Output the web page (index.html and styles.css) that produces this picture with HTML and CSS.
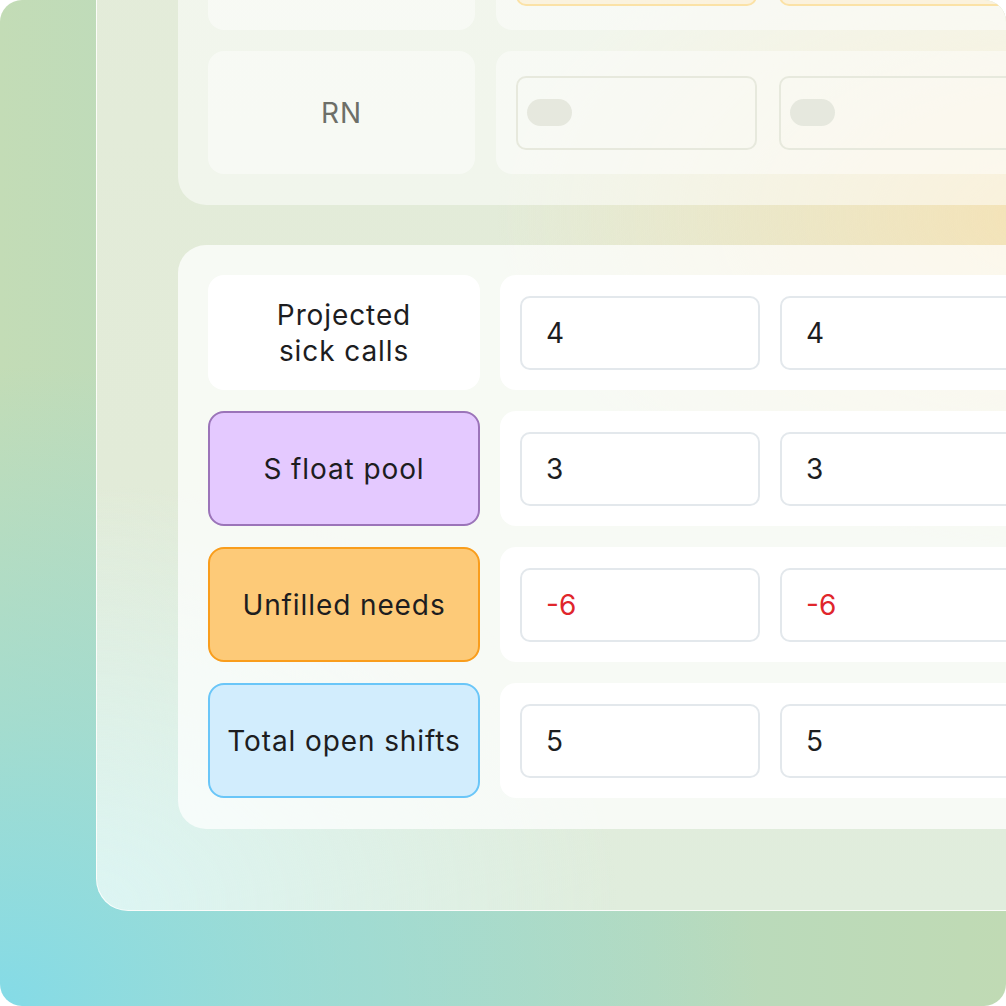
FILE: index.html
```html
<!DOCTYPE html>
<html lang="en">
<head>
<meta charset="utf-8">
<title>Staffing grid</title>
<link rel="stylesheet" href="styles.css">
</head>
<body>
<div class="frame">
  <div class="panel">
    <section class="sheet sheet-faded">
      <div class="row">
        <div class="label"></div>
        <div class="cells">
          <div class="input input-warn"></div>
          <div class="input input-warn"></div>
          <div class="input input-warn"></div>
        </div>
      </div>
      <div class="row">
        <div class="label">RN</div>
        <div class="cells">
          <div class="input"><span class="pill"></span></div>
          <div class="input"><span class="pill"></span></div>
          <div class="input"><span class="pill"></span></div>
        </div>
      </div>
    </section>

    <section class="sheet sheet-main">
      <div class="row">
        <div class="label label-plain">Projected<br>sick calls</div>
        <div class="cells">
          <div class="input">4</div>
          <div class="input">4</div>
          <div class="input">4</div>
        </div>
      </div>
      <div class="row">
        <div class="label label-purple">S float pool</div>
        <div class="cells">
          <div class="input">3</div>
          <div class="input">3</div>
          <div class="input">3</div>
        </div>
      </div>
      <div class="row">
        <div class="label label-orange">Unfilled needs</div>
        <div class="cells">
          <div class="input negative">-6</div>
          <div class="input negative">-6</div>
          <div class="input negative">-6</div>
        </div>
      </div>
      <div class="row">
        <div class="label label-blue">Total open shifts</div>
        <div class="cells">
          <div class="input">5</div>
          <div class="input">5</div>
          <div class="input">5</div>
        </div>
      </div>
    </section>
  </div>
</div>
</body>
</html>
```

FILE: styles.css
```css
* { box-sizing: border-box; }

html, body {
  margin: 0;
  padding: 0;
  background: #ffffff;
}

body {
  font-family: Inter, "Noto Sans", "Liberation Sans", sans-serif;
  color: #1d1d1f;
}

.frame {
  width: 1006px;
  height: 1006px;
  border-radius: 22px;
  overflow: hidden;
  background:
    radial-gradient(ellipse 760px 640px at 0% 100%, #84dbe7 0%, rgba(140, 220, 225, 0.55) 45%, rgba(140, 220, 225, 0) 100%),
    linear-gradient(90deg, #c3dcb6 0%, #b6dac2 35%, #b8dabd 65%, #c0dab4 100%);
}

.panel {
  width: 1300px;
  margin-left: 96px;
  margin-top: -205px;
  padding: 81px;
  border: 1px solid rgba(255, 255, 255, 0.85);
  border-radius: 32px;
  display: flex;
  flex-direction: column;
  gap: 40px;
  background:
    radial-gradient(ellipse 560px 330px at 960px 420px, rgba(246, 226, 180, 0.95) 0%, rgba(246, 226, 180, 0) 100%),
    radial-gradient(ellipse 520px 420px at 0px 1110px, rgba(220, 245, 243, 1) 0%, rgba(220, 245, 243, 0) 100%),
    linear-gradient(180deg, #e4ecda 0%, #e2ebd8 60%, #e0eddd 100%);
}

.sheet {
  border-radius: 28px;
  padding: 30px 0 31px 30px;
  display: flex;
  flex-direction: column;
  gap: 21px;
}

.sheet-faded {
  background: rgba(255, 255, 255, 0.5);
}

.sheet-main {
  background: rgba(255, 255, 255, 0.72);
}

.row {
  display: grid;
  grid-template-columns: 272px 1fr;
  gap: 20px;
  height: 115px;
}

.sheet-faded .row {
  grid-template-columns: 267px 1fr;
  gap: 21px;
  height: 123px;
}

.label {
  border-radius: 16px;
  display: flex;
  align-items: center;
  justify-content: center;
  text-align: center;
  font-size: 28px;
  line-height: 36px;
  letter-spacing: 0.9px;
}

.sheet-faded .label {
  background: rgba(255, 255, 255, 0.45);
  color: #6d6f68;
  font-size: 28px;
}

.label-plain {
  background: #ffffff;
}

.label-purple {
  background: #e4c9ff;
  border: 2.5px solid #9b74b9;
}

.label-orange {
  background: #fdca78;
  border: 2.5px solid #f99d1c;
}

.label-blue {
  background: #d2edfd;
  border: 2.5px solid #6ac6f8;
}

.cells {
  border-radius: 16px 0 0 16px;
  background: #ffffff;
  padding: 20px;
  display: flex;
  align-items: center;
  gap: 20px;
}

.sheet-faded .cells {
  background: rgba(255, 255, 255, 0.45);
  gap: 22px;
}

.input {
  flex: none;
  width: 240px;
  height: 74px;
  border: 2px solid #e3e8ec;
  border-radius: 10px;
  padding-left: 24px;
  display: flex;
  align-items: center;
  font-size: 28px;
}

.sheet-faded .input {
  width: 241px;
  border-color: #e7e9dd;
  padding-left: 9px;
}

.sheet-faded .input-warn {
  border-color: #fbe2a6;
  background: rgba(253, 236, 200, 0.5);
}

.negative {
  color: #e0262b;
}

.pill {
  display: block;
  width: 45px;
  height: 27px;
  border-radius: 14px;
  background: #e6e8de;
}
```
